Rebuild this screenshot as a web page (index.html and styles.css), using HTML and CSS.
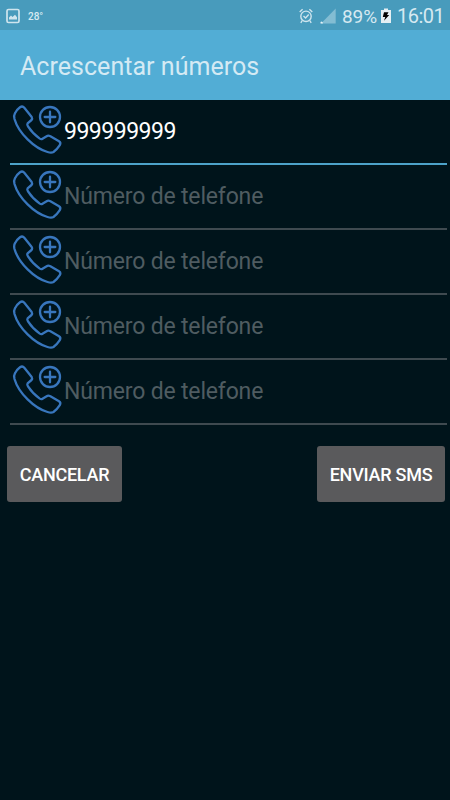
FILE: index.html
```html
<!DOCTYPE html>
<html lang="pt">
<head>
<meta charset="utf-8">
<title>Acrescentar números</title>
<link rel="stylesheet" href="styles.css">
</head>
<body>
<svg class="defs" aria-hidden="true">
  <symbol id="phone-add" viewBox="0 0 54 60">
    <g fill="none" stroke="#3876bd" stroke-width="2.3" stroke-linejoin="round" stroke-linecap="round">
      <path d="M10 7.3Q12.5 5.6 14.3 7.8L21.7 17Q22.6 18.5 21.5 20L17.6 23.3Q16.8 24.5 18 26.4Q22.5 33.5 29.8 38.6Q31.2 39.5 32.5 38.7L36.6 36.2Q38.3 35 40 36.1L49 41.2Q51.2 42.6 49.8 45.2Q47 49.5 43.5 52Q41.5 53.2 37.5 52C24.5 48.5 8.5 33 4.5 19Q3.6 15.5 5 13.2Q7 9.5 10 7.3Z"/>
      <circle cx="40" cy="17" r="10"/>
      <path d="M34.7 17H45.3M40 11.7V22.3"/>
    </g>
  </symbol>
</svg>
<header>
  <div class="status">
    <svg class="picture" viewBox="0 0 14 16" width="14" height="16"><rect x="1" y="1.5" width="12" height="13" rx="1.5" fill="none" stroke="#cfe5ee" stroke-width="1.7"/><path d="M3 11.5V9.5L5 7.5L6.5 9L9 6.8L11 9.2V11.5Z" fill="#cfe5ee"/></svg>
    <span class="temp">28°</span>
    <svg class="alarm" viewBox="0 0 14 16" width="14" height="16"><g fill="none" stroke="#cfe5ee" stroke-width="1.4"><circle cx="7" cy="8.3" r="5.2"/><path d="M.7 4L3.6 1.3M13.3 4L10.4 1.3M4.5 8L6.6 10L9.7 6.5M3.2 12.5L1.8 14.8M10.8 12.5L12.2 14.8"/></g></svg>
    <svg class="signal" viewBox="0 0 16 16" width="16" height="16"><path d="M1 15.5L15.7 .5V15.5Z" fill="#83bdd3"/><path d="M.5 15.5V14L1.7 13.5L2.8 14.5V15.5Z" fill="#e5f2f7"/></svg>
    <span class="percent">89%</span>
    <svg class="battery" viewBox="0 0 10 16" width="10" height="16"><path d="M3 .5H7V2H10V15H0V2H3Z" fill="#e5eff3"/><path d="M3 4.2H7.5L6 7H8.2L3 12.7L4.3 9H1.8Z" fill="#000"/></svg>
    <span class="clock">16:01</span>
  </div>
  <div class="titlebar"><h1>Acrescentar números</h1></div>
</header>
<main>
  <div class="field active"><svg><use href="#phone-add"/></svg><span>999999999</span></div>
  <div class="field"><svg><use href="#phone-add"/></svg><span>Número de telefone</span></div>
  <div class="field"><svg><use href="#phone-add"/></svg><span>Número de telefone</span></div>
  <div class="field"><svg><use href="#phone-add"/></svg><span>Número de telefone</span></div>
  <div class="field"><svg><use href="#phone-add"/></svg><span>Número de telefone</span></div>
  <div class="actions">
    <button class="cancel">CANCELAR</button>
    <button class="send">ENVIAR SMS</button>
  </div>
</main>
</body>
</html>
```
FILE: styles.css
```css
* { box-sizing: border-box; }
body { margin: 0; min-height: 800px; background: #00141b; font-family: Roboto, sans-serif; overflow: hidden; }
.defs { display: none; }
.status { height: 30px; background: #489bbc; display: flex; align-items: center; padding: 2px 6px 0 6px; color: #d6e9f1; white-space: nowrap; }
.status svg { flex: none; }
.temp { margin-left: 8px; font-size: 10px; font-weight: 500; }
.alarm { margin-left: auto; }
.signal { margin-left: 7px; }
.percent { margin-left: 6px; width: 35px; font-size: 19px; letter-spacing: -0.1px; }
.battery { margin-left: 4px; }
.clock { margin-left: 6px; width: 47px; font-size: 20px; letter-spacing: -0.5px; }
.titlebar { height: 70px; background: #52add5; padding-left: 20px; display: flex; align-items: center; }
h1 { margin: 3px 0 0; font-size: 25px; line-height: 30px; font-weight: 400; letter-spacing: 0.04px; color: #d4eaf4; }
main { padding: 0 3px 0 10px; }
.field { height: 65px; border-bottom: 2px solid #3f4a50; display: flex; color: #4f5c61; font-size: 23px; letter-spacing: -0.17px; }
.field.active { border-bottom-color: #4da3c9; color: #fff; letter-spacing: -0.5px; }
.field svg { width: 54px; height: 60px; flex: none; }
.field span { line-height: 64px; white-space: nowrap; }
.actions { display: flex; justify-content: space-between; margin: 21px 2px 0 -3px; }
button { height: 56px; border: 0; border-radius: 3px; padding: 0; background: #5a5a5c; color: #fff; font: 500 18px Roboto, sans-serif; letter-spacing: -0.25px; white-space: nowrap; }
.cancel { width: 115px; }
.send { width: 128px; }
```
